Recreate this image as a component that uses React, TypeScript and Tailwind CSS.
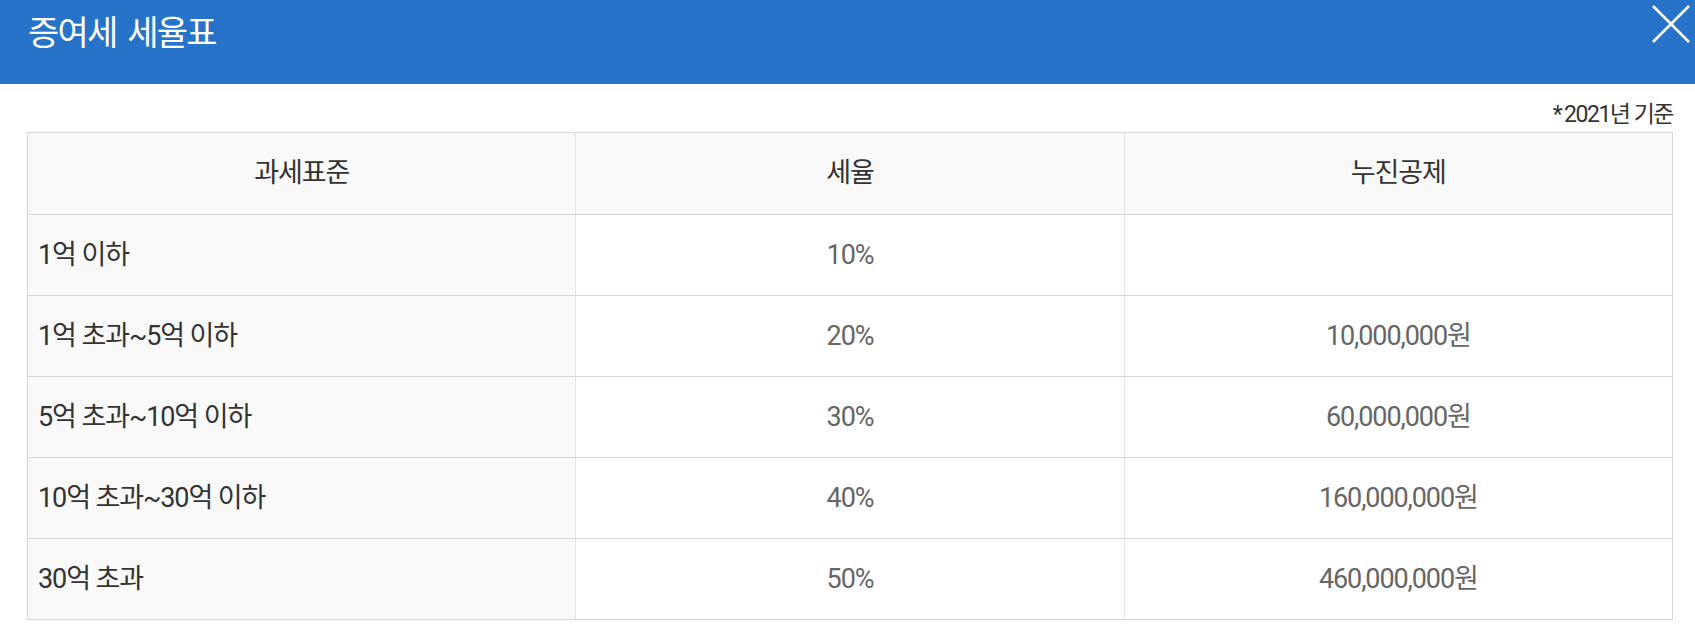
const rows = [
  { base: "1억 이하", rate: "10%", deduct: "" },
  { base: "1억 초과~5억 이하", rate: "20%", deduct: "10,000,000원" },
  { base: "5억 초과~10억 이하", rate: "30%", deduct: "60,000,000원" },
  { base: "10억 초과~30억 이하", rate: "40%", deduct: "160,000,000원" },
  { base: "30억 초과", rate: "50%", deduct: "460,000,000원" },
];

function CloseIcon() {
  return (
    <svg width="40" height="40" viewBox="0 0 40 40" aria-hidden>
      <path d="M2 2 L38 38 M38 2 L2 38" stroke="#fff" strokeWidth={2.6} fill="none" />
    </svg>
  );
}

export default function App() {
  return (
    <div className="w-[1695px] h-[628px] bg-white font-['Roboto','Noto_Sans_CJK_KR',sans-serif] overflow-hidden">
      {/* 상단 타이틀 바 */}
      <div className="h-[84px] bg-[#2673c9] flex items-start justify-between">
        <h1 className="pl-[28px] pt-[11px] text-[34px] leading-[40px] tracking-[-1.8px] [word-spacing:5px] text-white font-['Noto_Sans_CJK_KR',sans-serif]">
          증여세 세율표
        </h1>
        <button className="mt-[4px] mr-[4px]">
          <CloseIcon />
        </button>
      </div>

      <div className="pl-[27px] pr-[22px]">
        <div className="h-[48px] flex items-end justify-end pb-[4px]">
          <span className="text-[23px] leading-[27px] tracking-[-1.5px] text-[#333]">
            *<span className="pl-[3px]">2021년 기준</span>
          </span>
        </div>

        <table className="w-full table-fixed border-collapse border border-[#d6d6d6] text-[27px] tracking-[-1.1px]">
          <thead>
            <tr className="h-[82px] bg-[#f9f9f9] text-[#333]">
              <th className="font-normal border-b border-[#d6d6d6] border-r border-r-[#e4e4e4]">과세표준</th>
              <th className="font-normal border-b border-[#d6d6d6] border-r border-r-[#e4e4e4]">세율</th>
              <th className="font-normal border-b border-[#d6d6d6]">누진공제</th>
            </tr>
          </thead>
          <tbody>
            {rows.map((r) => (
              <tr key={r.base} className="h-[81px]">
                <td className="bg-[#f9f9f9] text-[#333] pl-[10px] border-b border-[#d6d6d6] border-r border-r-[#e4e4e4]">
                  {r.base}
                </td>
                <td className="text-center text-[#666] border-b border-[#d6d6d6] border-r border-r-[#e4e4e4]">
                  {r.rate}
                </td>
                <td className="text-center text-[#666] border-b border-[#d6d6d6]">{r.deduct}</td>
              </tr>
            ))}
          </tbody>
        </table>
      </div>
    </div>
  );
}
